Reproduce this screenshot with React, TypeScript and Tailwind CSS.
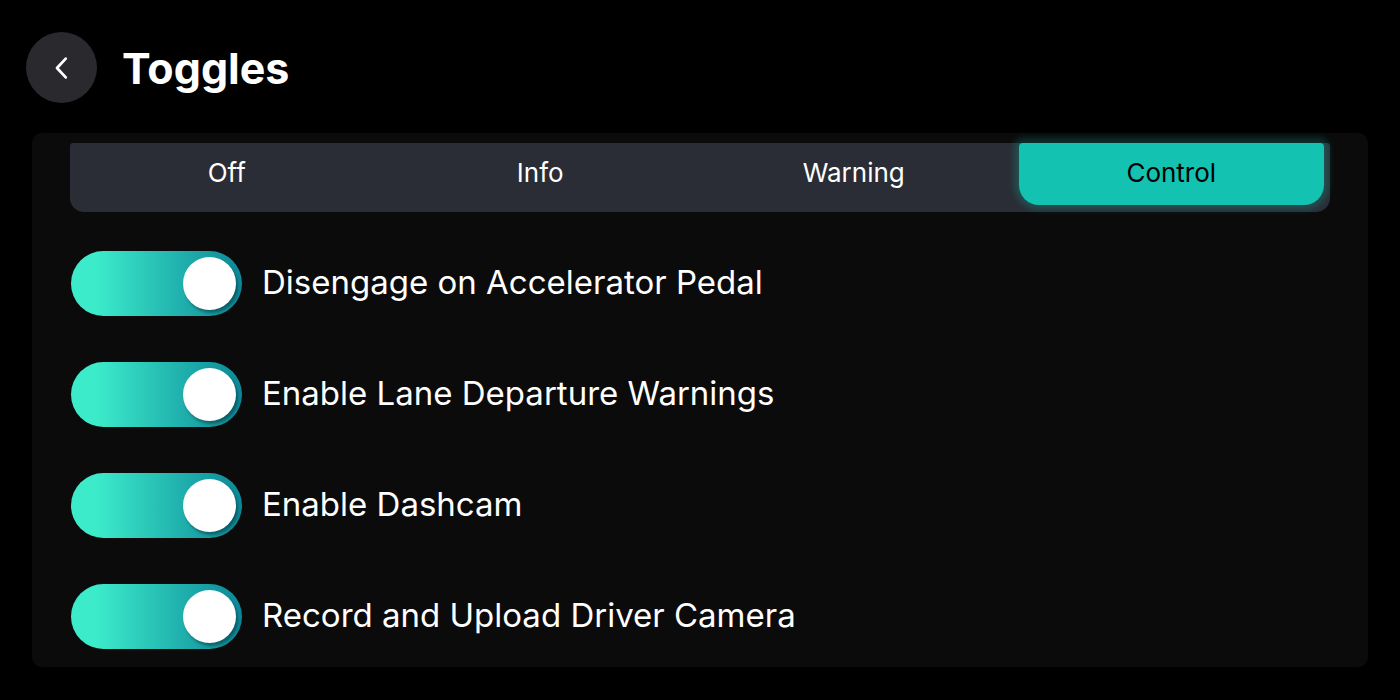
import React, { useState } from 'react';

const tabs = ['Off', 'Info', 'Warning', 'Control'];

const settings = [
  'Disengage on Accelerator Pedal',
  'Enable Lane Departure Warnings',
  'Enable Dashcam',
  'Record and Upload Driver Camera',
];

const Toggle: React.FC<{ on: boolean; onClick: () => void }> = ({ on, onClick }) => (
  <button
    onClick={onClick}
    className={`flex h-[65px] w-[171px] shrink-0 items-center rounded-full px-[6px] ${
      on
        ? 'justify-end bg-gradient-to-r from-[#3cebca] from-15% to-[#0b8898]'
        : 'justify-start bg-[#3a3d45]'
    }`}
  >
    <span className="h-[53px] w-[53px] rounded-full bg-white shadow-[2px_3px_3px_rgba(0,0,0,0.35)]" />
  </button>
);

const App: React.FC = () => {
  const [active, setActive] = useState(3);
  const [values, setValues] = useState([true, true, true, true]);

  return (
    <main
      className="flex h-[700px] w-[1400px] flex-col bg-black text-white"
      style={{ fontFamily: 'Inter, "Noto Sans", sans-serif' }}
    >
      <header className="flex h-[133px] items-start gap-[25px] pl-[26px] pt-[32px]">
        <button className="flex h-[71px] w-[71px] items-center justify-center rounded-full bg-[#2a2a2e]">
          <svg width="30" height="30" viewBox="0 0 24 24" fill="none" stroke="white" strokeWidth="2.2" strokeLinecap="round" strokeLinejoin="round">
            <path d="M15 4.5l-7 7.5 7 7.5" />
          </svg>
        </button>
        <h1 className="mt-[11px] text-[43px] font-bold leading-[50px]">Toggles</h1>
      </header>

      <section className="mx-[32px] flex h-[534px] flex-col rounded-[10px] bg-[#0b0b0b] px-[38px] pt-[10px]">
        <div className="grid h-[69px] w-[1260px] grid-cols-4 rounded-b-[14px] rounded-t-[3px] bg-[#2a2d35] pr-[6px]">
          {tabs.map((tab, i) => (
            <button
              key={tab}
              onClick={() => setActive(i)}
              className={`flex h-[62px] items-center justify-center pb-[3px] text-[26px] ${
                active === i
                  ? 'ml-[8px] rounded-b-[20px] rounded-t-[4px] bg-[#13c2b0] text-black shadow-[0_0_6px_5px_rgba(19,194,176,0.22)]'
                  : 'text-white'
              }`}
            >
              {tab}
            </button>
          ))}
        </div>

        <ul className="mt-[39px] flex flex-col gap-[46px]">
          {settings.map((label, i) => (
            <li key={label} className="flex items-center gap-[20px] pl-[1px]">
              <Toggle
                on={values[i]}
                onClick={() => setValues((v) => v.map((x, j) => (j === i ? !x : x)))}
              />
              <span className="pb-[3px] text-[33px] leading-[40px]">{label}</span>
            </li>
          ))}
        </ul>
      </section>
    </main>
  );
};

export default App;
